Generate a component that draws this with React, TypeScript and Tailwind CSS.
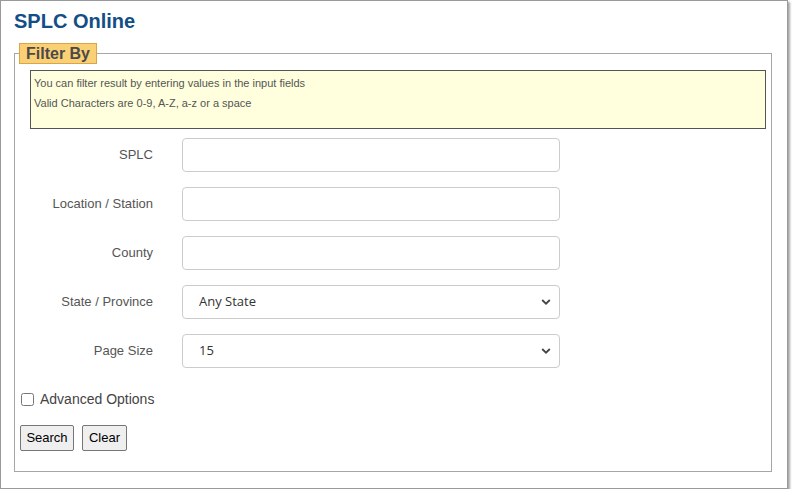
import React from "react";

const fields = ["SPLC", "Location / Station", "County"];

const Chevron = () => (
  <svg
    className="pointer-events-none absolute right-[9px] top-1/2 -translate-y-1/2"
    width="10"
    height="7"
    viewBox="0 0 10 7"
  >
    <path d="M1.2 1.5 L5 5.2 L8.8 1.5" fill="none" stroke="#444" strokeWidth="1.8" />
  </svg>
);

const FormRow: React.FC<{ label: string; children: React.ReactNode }> = ({ label, children }) => (
  <div className="flex items-center">
    <label className="w-[133px] text-right text-[13px] text-[#555]">{label}</label>
    <div className="ml-[29px]">{children}</div>
  </div>
);

const SelectBox: React.FC<{ value: string }> = ({ value }) => (
  <div className="relative w-[378px] h-[34px]">
    <select
      defaultValue={value}
      className="w-full h-full appearance-none rounded-[4px] border border-[#ccc] bg-white pl-[16px] text-[13px] text-[#333] font-['Open_Sans',sans-serif] outline-none"
    >
      <option>{value}</option>
    </select>
    <Chevron />
  </div>
);

export default function App() {
  return (
    <div className="font-['Liberation_Sans',Arial,sans-serif] bg-white">
      <div className="w-[788px] h-[489px] border border-[#9a9a9a] bg-white shadow-[2px_2px_2px_rgba(0,0,0,0.35)]">
        <h1 className="pl-[13px] pt-[8px] text-[20px] leading-[24px] font-bold text-[#134e86]">
          SPLC Online
        </h1>
        <fieldset className="ml-[13px] mt-[10px] w-[758px] h-[429px] border border-[#a6a6a6] px-[5px]">
          <legend className="ml-[-1px] h-[21px] px-[6px] border border-[#d6a649] bg-[#fbcf74] text-[16px] leading-[19px] font-bold text-[#4a4a4a]">
            Filter By
          </legend>
          <div className="ml-[10px] mt-[6px] h-[59px] border border-[#555] bg-[#ffffdd] pl-[3px] pt-[2px] text-[11px] leading-[20px] text-[#555]">
            <div>You can filter result by entering values in the input fields</div>
            <div>Valid Characters are 0-9, A-Z, a-z or a space</div>
          </div>
          <div className="mt-[9px] flex flex-col gap-[15px]">
            {fields.map((f) => (
              <FormRow key={f} label={f}>
                <input
                  type="text"
                  className="w-[378px] h-[34px] rounded-[4px] border border-[#ccc] bg-white px-3 outline-none"
                />
              </FormRow>
            ))}
            <FormRow label="State / Province">
              <SelectBox value="Any State" />
            </FormRow>
            <FormRow label="Page Size">
              <SelectBox value="15" />
            </FormRow>
          </div>
          <label className="mt-[21px] ml-[1px] flex items-center gap-[6px] text-[14px] text-[#444]">
            <input type="checkbox" className="w-[13px] h-[13px] m-0 accent-[#555]" />
            Advanced Options
          </label>
          <div className="mt-[15px] flex gap-[8px]">
            <button className="h-[26px] w-[54px] rounded-[2px] border border-[#767676] bg-[#efefef] text-[13px] text-black">
              Search
            </button>
            <button className="h-[26px] w-[45px] rounded-[2px] border border-[#767676] bg-[#efefef] text-[13px] text-black">
              Clear
            </button>
          </div>
        </fieldset>
      </div>
    </div>
  );
}
